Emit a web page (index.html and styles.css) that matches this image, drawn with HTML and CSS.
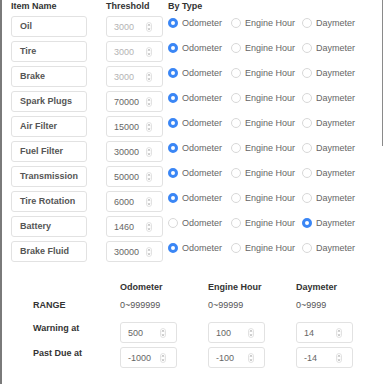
FILE: index.html
```html
<!DOCTYPE html>
<html lang="en">
<head>
<meta charset="UTF-8">
<title>Maintenance thresholds</title>
<link rel="stylesheet" href="styles.css">
</head>
<body>

<div id="container">

<div class="items">
<div class="head">Item Name</div>
<div class="head">Threshold</div>
<div class="head">By Type</div>

<div class="namebox">Oil</div>
<div class="numbox disabled"><span>3000</span><svg class="spin" viewBox="0 0 6 10"><rect x="0.5" y="0.5" width="5" height="9" rx="2.5"/><path d="M1.8 3.6 L3 2.5 L4.2 3.6 M1.8 6.4 L3 7.5 L4.2 6.4"/></svg></div>
<div class="types"><label class="opt"><i class="radio on"></i>Odometer</label><label class="opt"><i class="radio"></i>Engine Hour</label><label class="opt"><i class="radio"></i>Daymeter</label></div>

<div class="namebox">Tire</div>
<div class="numbox disabled"><span>3000</span><svg class="spin" viewBox="0 0 6 10"><rect x="0.5" y="0.5" width="5" height="9" rx="2.5"/><path d="M1.8 3.6 L3 2.5 L4.2 3.6 M1.8 6.4 L3 7.5 L4.2 6.4"/></svg></div>
<div class="types"><label class="opt"><i class="radio on"></i>Odometer</label><label class="opt"><i class="radio"></i>Engine Hour</label><label class="opt"><i class="radio"></i>Daymeter</label></div>

<div class="namebox">Brake</div>
<div class="numbox disabled"><span>3000</span><svg class="spin" viewBox="0 0 6 10"><rect x="0.5" y="0.5" width="5" height="9" rx="2.5"/><path d="M1.8 3.6 L3 2.5 L4.2 3.6 M1.8 6.4 L3 7.5 L4.2 6.4"/></svg></div>
<div class="types"><label class="opt"><i class="radio on"></i>Odometer</label><label class="opt"><i class="radio"></i>Engine Hour</label><label class="opt"><i class="radio"></i>Daymeter</label></div>

<div class="namebox">Spark Plugs</div>
<div class="numbox"><span>70000</span><svg class="spin" viewBox="0 0 6 10"><rect x="0.5" y="0.5" width="5" height="9" rx="2.5"/><path d="M1.8 3.6 L3 2.5 L4.2 3.6 M1.8 6.4 L3 7.5 L4.2 6.4"/></svg></div>
<div class="types"><label class="opt"><i class="radio on"></i>Odometer</label><label class="opt"><i class="radio"></i>Engine Hour</label><label class="opt"><i class="radio"></i>Daymeter</label></div>

<div class="namebox">Air Filter</div>
<div class="numbox"><span>15000</span><svg class="spin" viewBox="0 0 6 10"><rect x="0.5" y="0.5" width="5" height="9" rx="2.5"/><path d="M1.8 3.6 L3 2.5 L4.2 3.6 M1.8 6.4 L3 7.5 L4.2 6.4"/></svg></div>
<div class="types"><label class="opt"><i class="radio on"></i>Odometer</label><label class="opt"><i class="radio"></i>Engine Hour</label><label class="opt"><i class="radio"></i>Daymeter</label></div>

<div class="namebox">Fuel Filter</div>
<div class="numbox"><span>30000</span><svg class="spin" viewBox="0 0 6 10"><rect x="0.5" y="0.5" width="5" height="9" rx="2.5"/><path d="M1.8 3.6 L3 2.5 L4.2 3.6 M1.8 6.4 L3 7.5 L4.2 6.4"/></svg></div>
<div class="types"><label class="opt"><i class="radio on"></i>Odometer</label><label class="opt"><i class="radio"></i>Engine Hour</label><label class="opt"><i class="radio"></i>Daymeter</label></div>

<div class="namebox">Transmission</div>
<div class="numbox"><span>50000</span><svg class="spin" viewBox="0 0 6 10"><rect x="0.5" y="0.5" width="5" height="9" rx="2.5"/><path d="M1.8 3.6 L3 2.5 L4.2 3.6 M1.8 6.4 L3 7.5 L4.2 6.4"/></svg></div>
<div class="types"><label class="opt"><i class="radio on"></i>Odometer</label><label class="opt"><i class="radio"></i>Engine Hour</label><label class="opt"><i class="radio"></i>Daymeter</label></div>

<div class="namebox">Tire Rotation</div>
<div class="numbox"><span>6000</span><svg class="spin" viewBox="0 0 6 10"><rect x="0.5" y="0.5" width="5" height="9" rx="2.5"/><path d="M1.8 3.6 L3 2.5 L4.2 3.6 M1.8 6.4 L3 7.5 L4.2 6.4"/></svg></div>
<div class="types"><label class="opt"><i class="radio on"></i>Odometer</label><label class="opt"><i class="radio"></i>Engine Hour</label><label class="opt"><i class="radio"></i>Daymeter</label></div>

<div class="namebox">Battery</div>
<div class="numbox"><span>1460</span><svg class="spin" viewBox="0 0 6 10"><rect x="0.5" y="0.5" width="5" height="9" rx="2.5"/><path d="M1.8 3.6 L3 2.5 L4.2 3.6 M1.8 6.4 L3 7.5 L4.2 6.4"/></svg></div>
<div class="types"><label class="opt"><i class="radio"></i>Odometer</label><label class="opt"><i class="radio"></i>Engine Hour</label><label class="opt"><i class="radio on"></i>Daymeter</label></div>

<div class="namebox">Brake Fluid</div>
<div class="numbox"><span>30000</span><svg class="spin" viewBox="0 0 6 10"><rect x="0.5" y="0.5" width="5" height="9" rx="2.5"/><path d="M1.8 3.6 L3 2.5 L4.2 3.6 M1.8 6.4 L3 7.5 L4.2 6.4"/></svg></div>
<div class="types"><label class="opt"><i class="radio on"></i>Odometer</label><label class="opt"><i class="radio"></i>Engine Hour</label><label class="opt"><i class="radio"></i>Daymeter</label></div>
</div><!-- items -->

<div class="limits">
<div></div>
<div class="head">Odometer</div>
<div class="head">Engine Hour</div>
<div class="head">Daymeter</div>

<div class="rowlabel">RANGE</div>
<div class="range">0~999999</div>
<div class="range">0~99999</div>
<div class="range">0~9999</div>

<div class="rowlabel">Warning at</div>
<div class="numbox"><span>500</span><svg class="spin" viewBox="0 0 6 10"><rect x="0.5" y="0.5" width="5" height="9" rx="2.5"/><path d="M1.8 3.6 L3 2.5 L4.2 3.6 M1.8 6.4 L3 7.5 L4.2 6.4"/></svg></div>
<div class="numbox"><span>100</span><svg class="spin" viewBox="0 0 6 10"><rect x="0.5" y="0.5" width="5" height="9" rx="2.5"/><path d="M1.8 3.6 L3 2.5 L4.2 3.6 M1.8 6.4 L3 7.5 L4.2 6.4"/></svg></div>
<div class="numbox"><span>14</span><svg class="spin" viewBox="0 0 6 10"><rect x="0.5" y="0.5" width="5" height="9" rx="2.5"/><path d="M1.8 3.6 L3 2.5 L4.2 3.6 M1.8 6.4 L3 7.5 L4.2 6.4"/></svg></div>

<div class="rowlabel">Past Due at</div>
<div class="numbox"><span>-1000</span><svg class="spin" viewBox="0 0 6 10"><rect x="0.5" y="0.5" width="5" height="9" rx="2.5"/><path d="M1.8 3.6 L3 2.5 L4.2 3.6 M1.8 6.4 L3 7.5 L4.2 6.4"/></svg></div>
<div class="numbox"><span>-100</span><svg class="spin" viewBox="0 0 6 10"><rect x="0.5" y="0.5" width="5" height="9" rx="2.5"/><path d="M1.8 3.6 L3 2.5 L4.2 3.6 M1.8 6.4 L3 7.5 L4.2 6.4"/></svg></div>
<div class="numbox"><span>-14</span><svg class="spin" viewBox="0 0 6 10"><rect x="0.5" y="0.5" width="5" height="9" rx="2.5"/><path d="M1.8 3.6 L3 2.5 L4.2 3.6 M1.8 6.4 L3 7.5 L4.2 6.4"/></svg></div>
</div><!-- limits -->

<div class="edge"></div>

</div><!-- container -->

</body>
</html>
```

FILE: styles.css
```css
body {
margin: 0;
padding: 0;
background: #fff;
}
#container {
position: relative;
height: 384px;
box-sizing: border-box;
padding: 0 0 0 9px;
border-left: 2px solid #7a7a7a;
font-family: "Liberation Sans", Arial, Helvetica, sans-serif;
font-size: 9px;
color: #666;
}
.edge {
position: absolute;
right: 1px;
top: 0;
width: 1px;
height: 146px;
background: #8a8a8a;
}
.head {
font-weight: bold;
color: #333;
line-height: 12px;
}
.items {
display: grid;
grid-template-columns: 95px 62px 1fr;
grid-auto-rows: 21px;
grid-template-rows: 12px;
row-gap: 4px;
}
.namebox {
width: 76px;
box-sizing: border-box;
border: 1px solid #e2e2e2;
border-radius: 3px;
padding-left: 8px;
line-height: 19px;
font-weight: bold;
color: #555;
}
.numbox {
width: 57px;
height: 21px;
box-sizing: border-box;
display: flex;
align-items: center;
justify-content: space-between;
border: 1px solid #e2e2e2;
border-radius: 3px;
padding: 0 10px 0 7px;
color: #666;
}
.numbox.disabled {
color: #b4b4b4;
}
.spin {
width: 6px;
height: 10px;
fill: none;
stroke-width: 0.7;
}
.spin rect {
stroke: #d6d6d6;
}
.spin path {
stroke: #777;
}
.types {
display: grid;
grid-template-columns: 63px 71px auto;
align-self: start;
line-height: 14px;
}
.opt {
display: flex;
align-items: center;
gap: 4px;
}
.radio {
width: 10px;
height: 10px;
box-sizing: border-box;
border: 1px solid #d8d8d8;
border-radius: 50%;
background: #fff;
}
.radio.on {
border: 3px solid #3a86f5;
background: #fff;
}
.limits {
display: grid;
grid-template-columns: 87px 88px 88px 88px;
grid-template-rows: 14px 20px 21px 21px;
row-gap: 4px;
margin: 18px 0 0 22px;
}
.limits .head {
line-height: 14px;
}
.rowlabel {
font-weight: bold;
color: #333;
line-height: 12px;
}
.range {
color: #555;
line-height: 14px;
}
.limits .rowlabel:nth-of-type(5) {
line-height: 14px;
}
```
